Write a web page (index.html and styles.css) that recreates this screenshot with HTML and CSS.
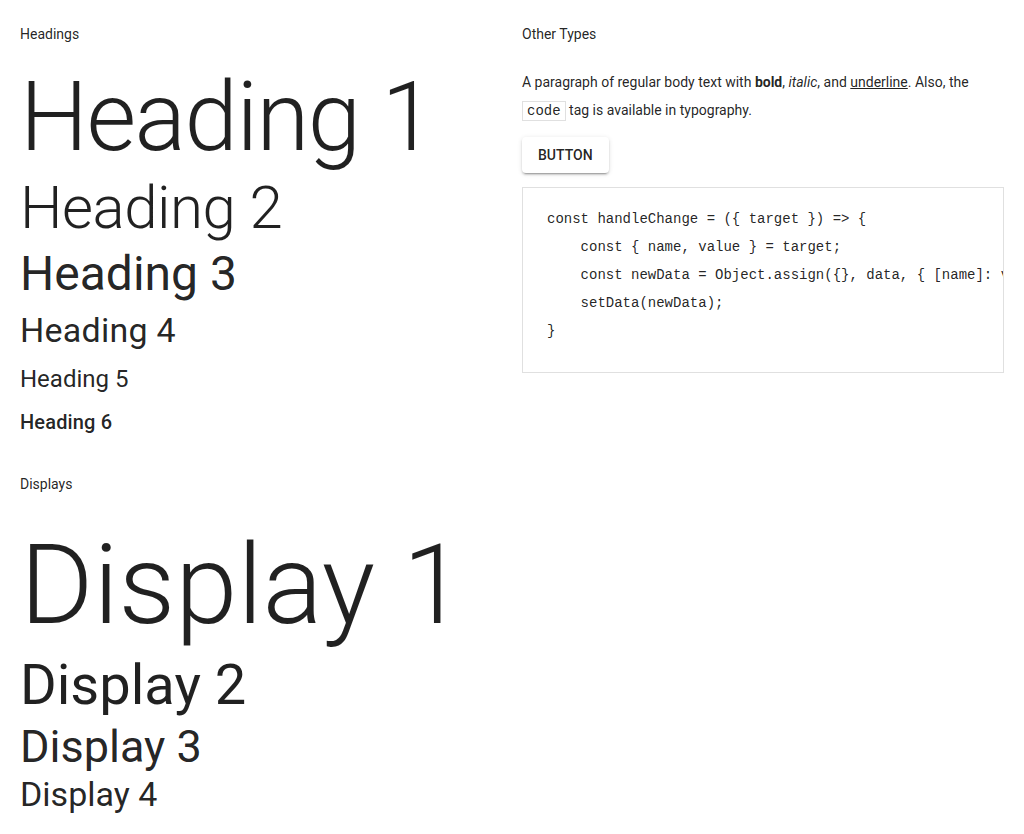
FILE: index.html
```html
<!DOCTYPE html>
<html lang="en">
<head>
<meta charset="utf-8">
<title>Typography</title>
<link rel="stylesheet" href="styles.css">
</head>
<body>
<main class="page">
  <div class="col">
    <section class="group">
      <div class="label">Headings</div>
      <h1 class="h1">Heading 1</h1>
      <h2 class="h2">Heading 2</h2>
      <h3 class="h3">Heading 3</h3>
      <h4 class="h4">Heading 4</h4>
      <h5 class="h5">Heading 5</h5>
      <h6 class="h6">Heading 6</h6>
    </section>
    <section class="group displays">
      <div class="label">Displays</div>
      <div class="d1">Display 1</div>
      <div class="d2">Display 2</div>
      <div class="d3">Display 3</div>
      <div class="d4">Display 4</div>
    </section>
  </div>
  <div class="col">
    <section class="group other">
      <div class="label">Other Types</div>
      <p class="body">A paragraph of regular body text with <strong>bold</strong>, <em>italic</em>, and <u>underline</u>. Also, the <code class="inline-code">code</code> tag is available in typography.</p>
      <button class="btn" type="button">Button</button>
      <pre class="codeblock">const handleChange = ({ target }) =&gt; {
    const { name, value } = target;
    const newData = Object.assign({}, data, { [name]: value });
    setData(newData);
}</pre>
    </section>
  </div>
</main>
</body>
</html>
```
FILE: styles.css
```css
* {
  box-sizing: border-box;
}

html, body {
  margin: 0;
  background: #ffffff;
}

body {
  font-family: Roboto, "Liberation Sans", Arial, sans-serif;
  color: rgba(0, 0, 0, 0.87);
  -webkit-font-smoothing: antialiased;
}

.page {
  display: grid;
  grid-template-columns: 1fr 1fr;
  column-gap: 20px;
  padding: 20px 20px 0;
  min-width: 0;
}

.col {
  min-width: 0;
  display: flex;
  flex-direction: column;
}

.group {
  display: flex;
  flex-direction: column;
  align-items: flex-start;
  min-width: 0;
}

.label {
  font-size: 14px;
  line-height: 28px;
  font-weight: 400;
}

h1, h2, h3, h4, h5, h6 {
  margin: 0;
  white-space: nowrap;
}

.h1 {
  margin-top: 13px;
  font-size: 96px;
  font-weight: 300;
  line-height: 112px;
  letter-spacing: -1.5px;
}

.h2 {
  font-size: 60px;
  font-weight: 300;
  line-height: 70px;
  letter-spacing: -0.5px;
}

.h3 {
  margin-top: 3px;
  font-size: 48px;
  font-weight: 400;
  line-height: 56px;
  letter-spacing: 0;
}

.h4 {
  margin-top: 7px;
  font-size: 34px;
  font-weight: 400;
  line-height: 42px;
  letter-spacing: 0.25px;
}

.h5 {
  margin-top: 12px;
  font-size: 24px;
  font-weight: 400;
  line-height: 32px;
  letter-spacing: 0;
}

.h6 {
  margin-top: 11px;
  font-size: 20px;
  font-weight: 500;
  line-height: 32px;
  letter-spacing: 0.15px;
}

.displays {
  margin-top: 32px;
}

.displays .label {
  margin-bottom: 22px;
}

.d1, .d2, .d3, .d4 {
  white-space: nowrap;
}

.d1 {
  font-size: 112px;
  font-weight: 300;
  line-height: 130px;
}

.d2 {
  font-size: 56px;
  font-weight: 400;
  line-height: 71px;
}

.d3 {
  font-size: 45px;
  font-weight: 400;
  line-height: 51px;
}

.d4 {
  margin-top: 1px;
  font-size: 34px;
  font-weight: 400;
  line-height: 42px;
}

.other {
  align-items: stretch;
}

.body {
  margin: 20px 0 0;
  font-size: 14px;
  line-height: 28px;
}

.body strong {
  font-weight: 700;
}

.inline-code {
  font-family: "Liberation Mono", "DejaVu Sans Mono", monospace;
  font-size: 14px;
  line-height: 1;
  padding: 1px 4px;
  border: 1px solid #e0e0e0;
  color: rgba(0, 0, 0, 0.87);
}

.btn {
  align-self: flex-start;
  margin-top: 13px;
  height: 36px;
  display: inline-flex;
  align-items: center;
  justify-content: center;
  padding: 0 16px;
  border: 0;
  border-radius: 4px;
  background: #ffffff;
  color: rgba(0, 0, 0, 0.87);
  font-family: Roboto, "Liberation Sans", Arial, sans-serif;
  font-size: 14px;
  font-weight: 500;
  letter-spacing: 0;
  text-transform: uppercase;
  box-shadow: 0 3px 1px -2px rgba(0, 0, 0, 0.2), 0 2px 2px 0 rgba(0, 0, 0, 0.14), 0 1px 5px 0 rgba(0, 0, 0, 0.12);
}

.codeblock {
  margin: 14px 0 0;
  padding: 17px 24px 27px;
  border: 1px solid #e0e0e0;
  overflow: hidden;
  font-family: "Liberation Mono", "DejaVu Sans Mono", monospace;
  font-size: 14px;
  line-height: 28px;
  color: rgba(0, 0, 0, 0.87);
  white-space: pre;
}
```
